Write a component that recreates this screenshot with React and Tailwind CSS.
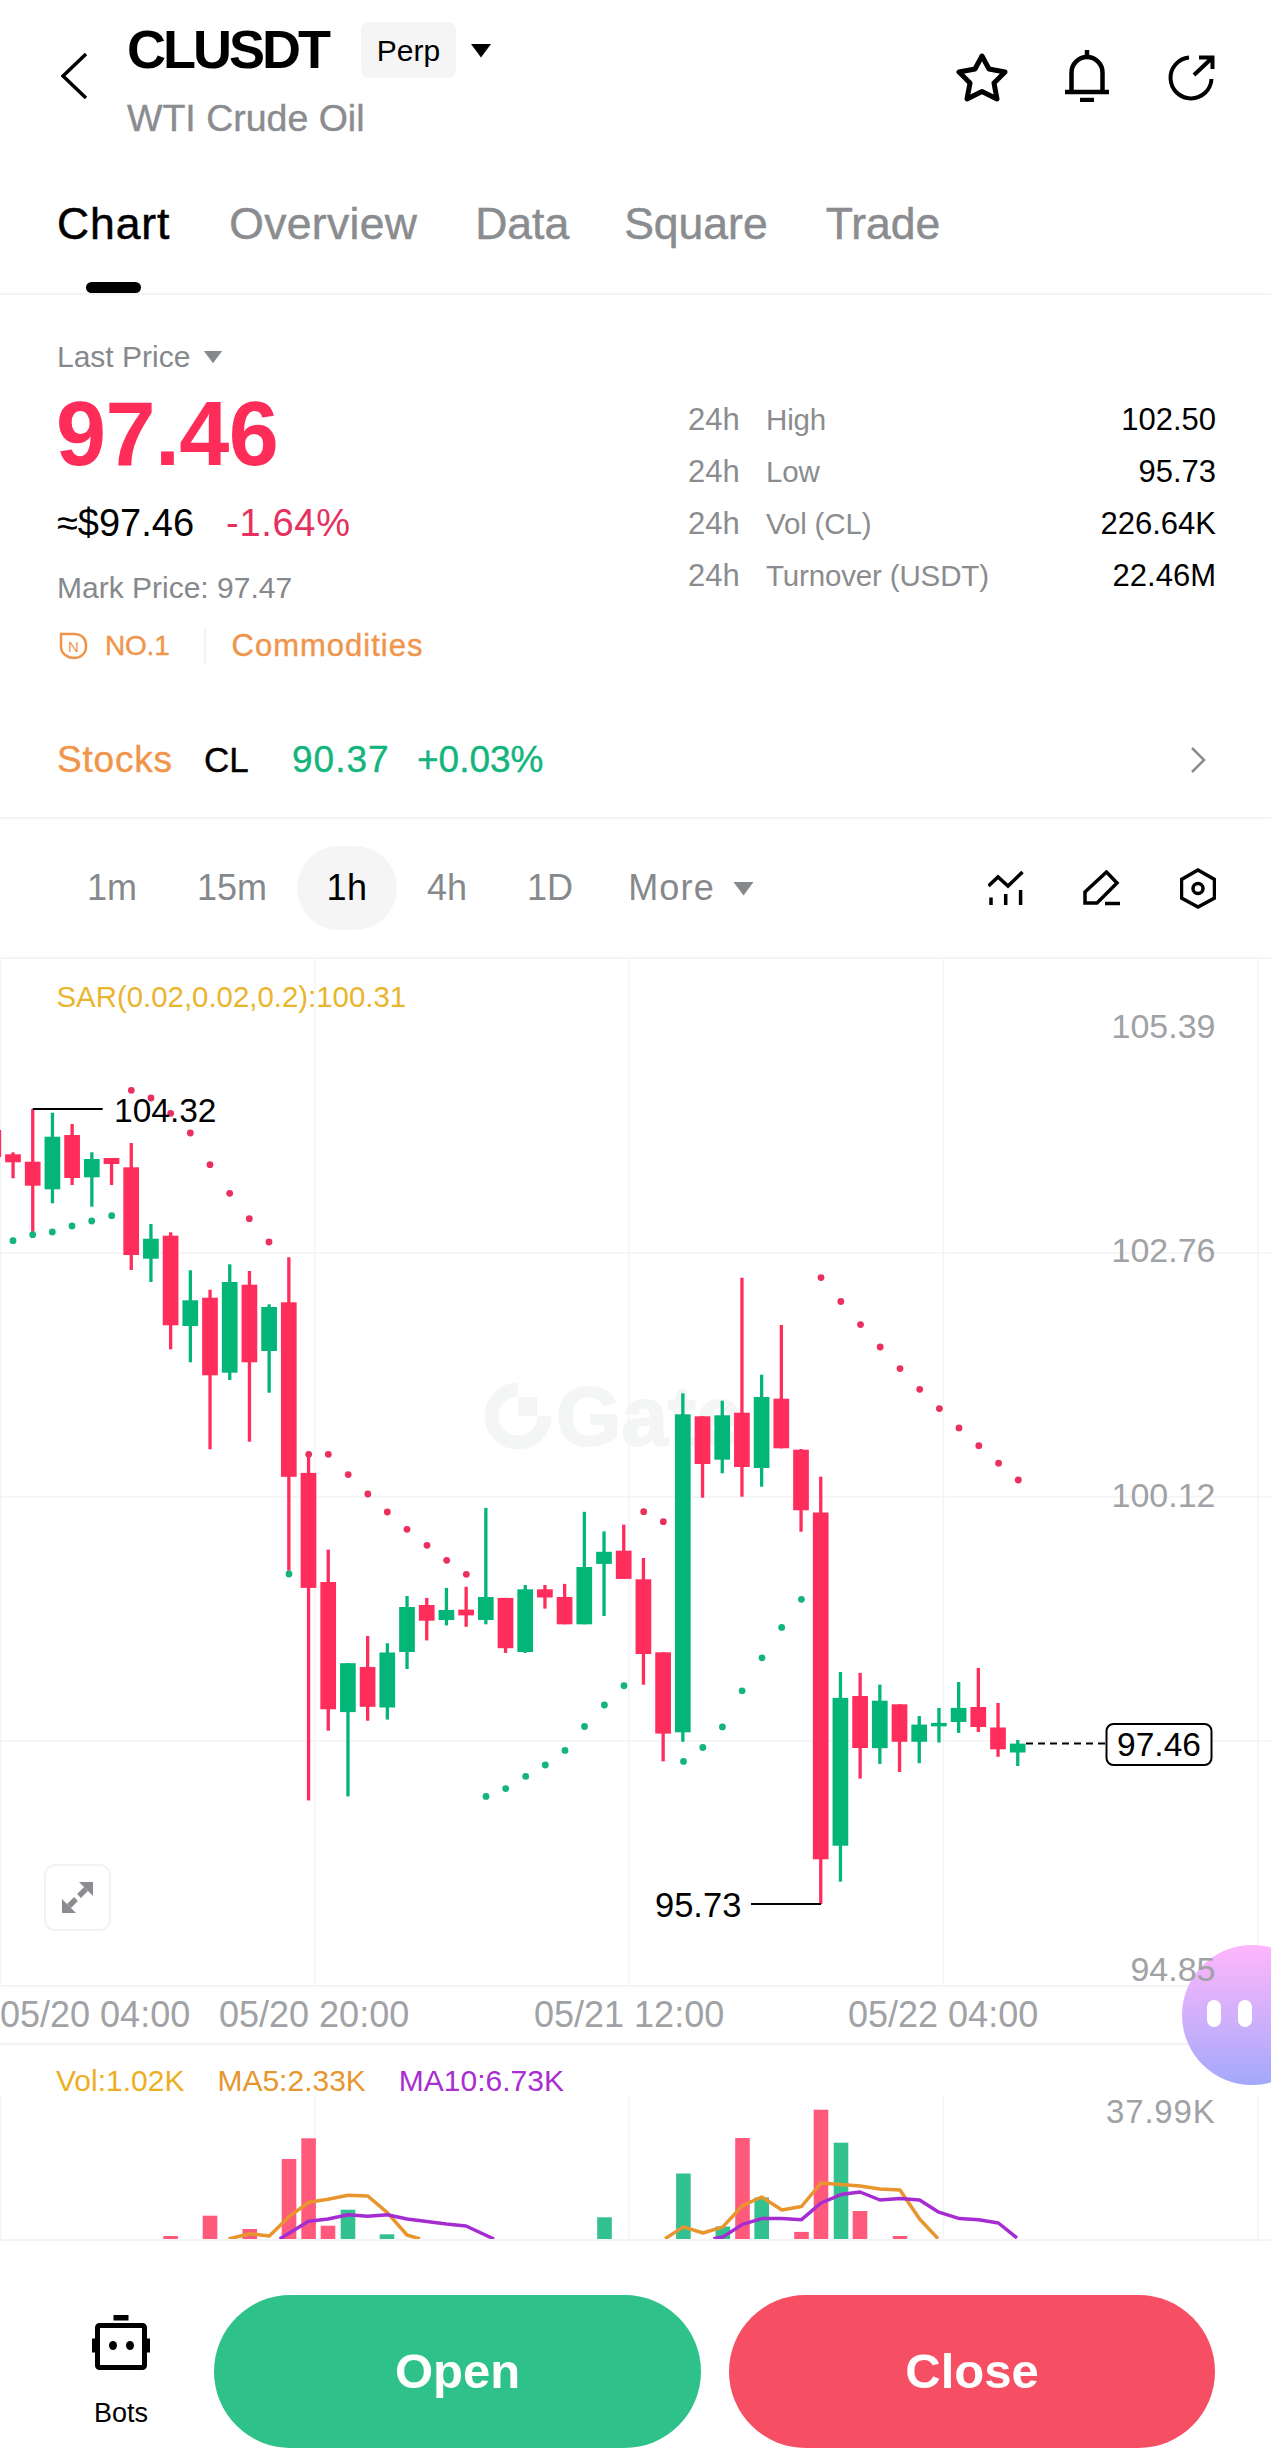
import React from "react";

// index of each candle: x = 13 + 19.7 * i
// [wick top, body top, body bottom, wick bottom, color]
const candles = [
  [1130, 1130, 1157, 1157, "r"],
  [1152.3, 1154.3, 1162.3, 1178.3, "r"],
  [1109, 1161.7, 1185.7, 1231.7, "r"],
  [1112.7, 1136.7, 1189.3, 1203.3, "g"],
  [1124, 1135, 1178, 1185, "r"],
  [1152.3, 1159, 1177.3, 1206.7, "g"],
  [1158, 1158, 1164, 1185, "r"],
  [1143, 1167.3, 1255, 1270, "r"],
  [1224, 1238.7, 1258.7, 1282, "g"],
  [1232.3, 1235.7, 1325.3, 1349.3, "r"],
  [1270.3, 1300.3, 1326, 1362.3, "g"],
  [1289.7, 1297.7, 1375.3, 1449.3, "r"],
  [1264.3, 1282, 1372.7, 1380, "g"],
  [1271, 1284.7, 1362.3, 1441.7, "r"],
  [1304.3, 1307, 1351, 1392.7, "g"],
  [1257.3, 1302.3, 1476.8, 1570.7, "r"],
  [1455, 1472.9, 1587.9, 1800.4, "r"],
  [1549.6, 1582, 1709.3, 1730.7, "r"],
  [1663.2, 1663.2, 1712.1, 1796.4, "g"],
  [1636, 1667, 1706.8, 1720.7, "r"],
  [1643.2, 1652.5, 1707.5, 1719.6, "g"],
  [1596, 1607, 1652, 1669, "g"],
  [1597.9, 1605, 1620.7, 1640.4, "r"],
  [1587.9, 1610, 1620, 1625.4, "g"],
  [1586.8, 1609.6, 1615.4, 1626.8, "r"],
  [1507.9, 1597, 1620, 1624.3, "g"],
  [1597.9, 1597.9, 1648.2, 1652.9, "r"],
  [1585, 1589.3, 1652, 1652.9, "g"],
  [1585, 1589.3, 1597.5, 1608.6, "r"],
  [1583.9, 1597, 1624.3, 1624.3, "r"],
  [1511.8, 1567, 1624.3, 1624.3, "g"],
  [1531.4, 1551.8, 1563.9, 1616, "g"],
  [1524.6, 1550.7, 1578.9, 1578.9, "r"],
  [1558, 1579.3, 1654, 1684.7, "r"],
  [1652.3, 1652.3, 1733.6, 1761.4, "r"],
  [1393.3, 1414.3, 1732.3, 1741.8, "g"],
  [1416.3, 1416.3, 1464, 1497.7, "r"],
  [1400.7, 1415.3, 1459.7, 1473.3, "g"],
  [1277.7, 1412.7, 1467, 1496.7, "r"],
  [1374.7, 1397, 1468, 1486.7, "g"],
  [1325, 1398.7, 1448.3, 1448.3, "r"],
  [1449, 1449.7, 1510.3, 1531.7, "r"],
  [1476.7, 1512.5, 1859.3, 1904, "r"],
  [1672, 1697.9, 1845.7, 1881.7, "g"],
  [1672.9, 1696, 1748, 1778.6, "r"],
  [1684.6, 1700.7, 1748.2, 1763.9, "g"],
  [1704.3, 1704.3, 1741.8, 1772, "r"],
  [1716, 1724.6, 1741.8, 1763.2, "g"],
  [1707.9, 1722.9, 1726.4, 1742.5, "g"],
  [1682, 1707.9, 1722, 1732.9, "g"],
  [1667.9, 1707, 1727, 1732, "r"],
  [1703, 1727.5, 1749.3, 1756.8, "r"],
  [1740, 1743.6, 1752.5, 1766, "g"],
];

const redDots = [
  [131.3, 1090.3], [151, 1098], [170.7, 1113.3], [190.3, 1133], [210, 1164.7], [229.7, 1193.3],
  [249.3, 1218.7], [269, 1242], [308.7, 1454.3], [328.3, 1454.3], [348.2, 1474.6], [367.8, 1494],
  [387.3, 1512], [407, 1529.3], [427, 1545.3], [446.7, 1560.3], [466.3, 1574.3], [643.7, 1511.7],
  [663.3, 1521.7], [821, 1277.6], [840.8, 1301.5], [860.5, 1324.6], [880.2, 1347], [900, 1368.6],
  [919.7, 1389.3], [939.4, 1408.6], [959, 1427.9], [978.8, 1445.7], [998.6, 1463.2], [1018.3, 1480],
];

const greenDots = [
  [13, 1240.7], [32.7, 1234.7], [52.3, 1232], [72, 1226], [91.7, 1221], [111.7, 1215.7], [289, 1574],
  [486, 1796.4], [505.7, 1788.6], [525.7, 1776.4], [545.3, 1765], [565, 1750.4], [584.5, 1726.5],
  [604.4, 1705], [624, 1685.7], [683.5, 1761.4], [702.8, 1747.5], [722.4, 1726.9], [742.1, 1690.8],
  [762, 1657.8], [781.7, 1627.4], [801.4, 1599.3],
];

const volBars = [
  [170.6, 2236, "r"], [210, 2215.7, "r"], [249.8, 2229, "r"], [289, 2159, "r"], [308.6, 2138.3, "r"],
  [328, 2225.7, "r"], [348, 2209.7, "g"], [387, 2234.3, "g"], [604.5, 2217.3, "g"], [683.4, 2173.5, "g"],
  [722.8, 2226.5, "g"], [742.5, 2138, "r"], [761.7, 2197.5, "g"], [801.5, 2231.9, "r"], [821, 2109.7, "r"],
  [841, 2142.7, "g"], [860, 2211, "r"], [900, 2236, "r"],
];

const ma5a = "228.6,2239 249.8,2233.7 269.4,2236 289,2216.7 308.6,2202.3 328,2199.3 348,2195.3 367.8,2196 387.3,2212.7 407,2235 420,2239";
const ma5b = "665,2238.7 683.4,2226.9 703,2233 722.8,2226.9 742.5,2205.7 761.7,2197 781.9,2210 801.5,2206.5 821,2183 841,2184.6 860,2186 880,2188.9 900,2190 919.6,2219 938,2238.7";
const ma10a = "279.6,2239 289,2233.3 308.6,2221.3 328,2219 348,2214.7 367.8,2216.3 387.3,2214.7 407,2219 446.5,2224 466,2226 494,2239";
const ma10b = "713.4,2238.7 722.8,2237 742.5,2224.4 761.7,2218.6 781.9,2218.6 801.5,2219.7 821,2203 841,2194.6 860,2192 880,2200 900,2198.6 919.6,2200 938,2211.8 959.4,2218.6 978.7,2219.7 998.4,2223 1017,2238";

const gridX = [0.5, 314.7, 628.7, 943.4, 1257.7];

const stats = [
  ["High", "102.50"],
  ["Low", "95.73"],
  ["Vol (CL)", "226.64K"],
  ["Turnover (USDT)", "22.46M"],
];

function Triangle({ className }) {
  return (
    <svg viewBox="0 0 22 15" className={className}>
      <path d="M1 1h20L11 14.500z" fill="currentColor" />
    </svg>
  );
}

function Candles() {
  return candles.map((c, n) => {
    const x = 13 + 19.7 * (n - 1);
    const fill = c[4] === "r" ? "#ff2d5b" : "#04b578";
    return (
      <g key={n} fill={fill}>
        <rect x={x - 1.6} y={c[0]} width="3.3" height={c[3] - c[0]} />
        <rect x={x - 7.85} y={c[1]} width="15.7" height={c[2] - c[1]} />
      </g>
    );
  });
}

function PriceChart() {
  return (
    <div className="relative h-[1026px]">
      <svg viewBox="0 959 1271 1026" className="block w-[1271px] h-[1026px]">
        {gridX.map((x) => (
          <line key={x} x1={x} x2={x} y1="959" y2={x > 1200 ? 1945 : 1985} stroke="#f3f3f3" strokeWidth="1.5" />
        ))}
        {[1253, 1497, 1741].map((y) => (
          <line key={y} x1="0" x2="1271" y1={y} y2={y} stroke="#f3f3f3" strokeWidth="1.5" />
        ))}

        {/* watermark */}
        <path d="M518 1389.500A26.500 26.500 0 1 0 544.500 1416" fill="none" stroke="#f4f5f5" strokeWidth="14" />
        <rect x="518" y="1397" width="19" height="19" fill="#f4f5f5" />
        <text x="556" y="1445" fontSize="84" fontWeight="700" fill="#f4f5f5" stroke="#f4f5f5" strokeWidth="2">Gate</text>

        <text x="56.500" y="1006.500" fontSize="29.400" fill="#eab52e">SAR(0.02,0.02,0.2):100.31</text>
        <g fontSize="34" fill="#a0a2a5" textAnchor="end">
          <text x="1215.500" y="1038">105.39</text>
          <text x="1215.500" y="1262">102.76</text>
          <text x="1215.500" y="1507">100.12</text>
          <text x="1215.500" y="1980.500">94.85</text>
        </g>

        <Candles />
        {redDots.map(([x, y]) => <circle key={x} cx={x} cy={y} r="3.400" fill="#e9305f" />)}
        {greenDots.map(([x, y]) => <circle key={x} cx={x} cy={y} r="3.400" fill="#13b57d" />)}

        {/* high / low markers */}
        <line x1="32.700" x2="102.700" y1="1109" y2="1109" stroke="#000" strokeWidth="2" />
        <text x="114" y="1121.500" fontSize="33.500" fill="#000">104.32</text>
        <line x1="751" x2="821" y1="1904" y2="1904" stroke="#000" strokeWidth="2" />
        <text x="655" y="1916.500" fontSize="34.500" fill="#000">95.73</text>

        {/* last price */}
        <line x1="1026" x2="1105" y1="1743.600" y2="1743.600" stroke="#000" strokeWidth="2" strokeDasharray="7 5" />
        <rect x="1106.500" y="1724" width="105" height="41" rx="7" fill="#fff" stroke="#000" strokeWidth="2" />
        <text x="1159" y="1756" fontSize="33.500" fill="#000" textAnchor="middle">97.46</text>
      </svg>

      <button className="absolute left-[44px] top-[905px] flex items-center justify-center w-[67px] h-[67px] bg-white border-2 border-[#f3f3f3] rounded-[11px]">
        <svg viewBox="0 0 31 31" className="w-[31px] h-[31px]" fill="#8a8c8f">
          <path d="M17 0h14v14z" />
          <path d="M0 31V17l14 14z" />
          <path d="M24 7l-7 7M7 24l7-7" stroke="#8a8c8f" strokeWidth="5.500" />
        </svg>
      </button>
    </div>
  );
}

function VolumeChart() {
  return (
    <svg viewBox="0 2096 1271 143" className="block w-[1271px] h-[143px]">
      {gridX.map((x) => (
        <line key={x} x1={x} x2={x} y1="2096" y2="2239" stroke="#f3f3f3" strokeWidth="1.5" />
      ))}
      {volBars.map(([x, y, c]) => (
        <rect key={x} x={x - 7.3} y={y} width="14.6" height={2239 - y} fill={c === "r" ? "#ff5a7b" : "#33c190"} />
      ))}
      <g fill="none" strokeWidth="3.5" strokeLinejoin="round">
        <polyline points={ma5a} stroke="#e8952e" />
        <polyline points={ma5b} stroke="#e8952e" />
        <polyline points={ma10a} stroke="#a52cd0" />
        <polyline points={ma10b} stroke="#a52cd0" />
      </g>
      <text x="1215.500" y="2123" fontSize="33" letterSpacing="0.8" fill="#a0a2a5" textAnchor="end">37.99K</text>
    </svg>
  );
}

export default function App() {
  return (
    <div className="relative w-[1271px] h-[2462px] overflow-hidden bg-white text-black font-['Liberation_Sans',Arial,sans-serif]">
      {/* floating assistant, the chart labels run over it */}
      <div className="absolute left-[1182px] top-[1945px] flex items-center gap-[17px] pl-[25px] w-[140px] h-[140px] rounded-full bg-linear-to-b from-[#ffb6fb] to-[#a3a8fb]">
        <span className="w-[14px] h-[27px] -mt-[4px] rounded-full bg-white"></span>
        <span className="w-[14px] h-[27px] -mt-[4px] rounded-full bg-white"></span>
      </div>

      {/* header */}
      <header className="flex items-start h-[198px] pl-[61px] pr-[56px] pt-[22px]">
        <svg viewBox="0 0 26 46" className="w-[26px] h-[46px] mt-[31px]" fill="none" stroke="#000" strokeWidth="3.5">
          <path d="M25 1L2 23l23 22" />
        </svg>
        <div className="ml-[40px]">
          <div className="flex items-center h-[56px]">
            <span className="text-[54px] leading-[56px] font-bold tracking-[-3px] -mt-[3px]">CLUSDT</span>
            <span className="flex items-center justify-center ml-[33px] w-[95px] h-[56px] rounded-[8px] bg-[#f5f5f5] text-[30px]">Perp</span>
            <Triangle className="w-[22px] h-[15px] ml-[14px] text-black" />
          </div>
          <div className="mt-[19px] text-[37.500px] leading-[42px] text-[#8a8c8f] [-webkit-text-stroke:0.4px]">WTI Crude Oil</div>
        </div>
        <div className="flex items-start ml-auto">
          <svg viewBox="0 0 52 50" className="w-[52px] h-[50px] mt-[30px]" fill="none" stroke="#000" strokeWidth="5" strokeLinejoin="round">
            <path d="M26 4l7 13 16 3-11 11 3 16-15-7.500L11 47l3-16L3 20l16-3z" />
          </svg>
          <svg viewBox="0 0 44 52" className="w-[44px] h-[52px] ml-[57px] mt-[28px]" fill="none" stroke="#000" strokeWidth="4.500">
            <path d="M22 0v6M6.500 41V22.500a15.500 15.500 0 0 1 31 0V41M0 42h44" />
            <path d="M15 50h14" strokeWidth="4.500" />
          </svg>
          <svg viewBox="0 0 47 46" className="w-[47px] h-[46px] ml-[59px] mt-[33px]" fill="none" stroke="#000" strokeWidth="4">
            <path d="M21 2.500A20.500 20.500 0 1 0 43.500 24" />
            <path d="M26 20L44 3M31 2.500h13.500V14" />
          </svg>
        </div>
      </header>

      {/* tabs */}
      <nav className="flex items-start h-[97px] pt-[1px] pl-[57px] gap-[59px] border-b-2 border-[#f4f4f4] text-[44.500px] leading-[50px] text-[#8a8c8f] [-webkit-text-stroke:0.5px]">
        <div className="flex flex-col items-center text-black">
          <span className="tracking-[0.900px]">Chart</span>
          <span className="w-[55px] h-[11px] mt-[33px] rounded-full bg-black"></span>
        </div>
        <span className="tracking-[0.300px]">Overview</span>
        <span className="-ml-[1px]">Data</span>
        <span className="-ml-[4px]">Square</span>
        <span className="-ml-[1px]">Trade</span>
      </nav>

      {/* price + 24h stats */}
      <section className="flex pl-[57px] pr-[55px] h-[443px]">
        <div className="flex-1 pt-[45px]">
          <div className="flex items-center text-[30px] leading-[34px] text-[#86898c]">
            Last Price
            <Triangle className="w-[20px] h-[14px] ml-[13px]" />
          </div>
          <div className="-ml-[1px] mt-[15px] text-[90px] leading-[90px] font-bold tracking-[-0.600px] text-[#fe2c59]">97.46</div>
          <div className="flex mt-[22px] text-[38px] leading-[44px]">
            <span>≈$97.46</span>
            <span className="ml-[32px] tracking-[0.700px] text-[#e6305e]">-1.64%</span>
          </div>
          <div className="mt-[26px] text-[30px] leading-[34px] text-[#86898c]">Mark Price: 97.47</div>
          <div className="flex items-center h-[36px] mt-[23px] text-[#f0954b]">
            <svg viewBox="0 0 29 28" className="w-[29px] h-[28px] ml-[2px]" fill="none" stroke="currentColor" strokeWidth="2.500">
              <path d="M2 2h13c8 0 12 5 12 11v2c0 7-6 11-12 11-7 0-13-5-13-11z" />
              <text x="14.500" y="20" fontSize="15" fill="currentColor" stroke="none" textAnchor="middle">N</text>
            </svg>
            <span className="ml-[17px] text-[28px] tracking-[-0.200px] [-webkit-text-stroke:0.4px]">NO.1</span>
            <span className="w-[2px] h-[36px] ml-[34px] bg-[#f4f4f4]"></span>
            <span className="ml-[26px] text-[31px] tracking-[1px] [-webkit-text-stroke:0.4px]">Commodities</span>
          </div>
        </div>
        <div className="w-[528px] pt-[99px]">
          {stats.map(([label, value]) => (
            <div key={label} className="flex h-[52px] items-center text-[#8a8c8f] text-[31px]">
              <span className="w-[78px]">24h</span>
              <span className="text-[29.500px] tracking-[-0.150px]">{label}</span>
              <span className="ml-auto text-black">{value}</span>
            </div>
          ))}
        </div>
      </section>

      {/* underlying stock */}
      <div className="flex items-start h-[81px] pt-[1px] pl-[57px] pr-[65px] text-[37px] leading-[42px] border-b-2 border-[#f4f4f4] [-webkit-text-stroke:0.4px]">
        <span className="tracking-[0.8px] text-[#f0954b] w-[147px]">Stocks</span>
        <span className="w-[88px] text-[35px]">CL</span>
        <span className="w-[125px] tracking-[1px] text-[#13b57d]">90.37</span>
        <span className="text-[#13b57d]">+0.03%</span>
        <svg viewBox="0 0 15 26" className="w-[15px] h-[26px] ml-auto mt-[8px]" fill="none" stroke="#8a8c8f" strokeWidth="2.500">
          <path d="M1 1l12 12L1 25" />
        </svg>
      </div>

      {/* timeframes */}
      <div className="flex items-center h-[140px] pl-[57px] pr-[55px] border-b-2 border-[#f4f4f4] text-[36px] text-[#86898c]">
        <span className="px-[30px]">1m</span>
        <span className="px-[30px]">15m</span>
        <span className="flex items-center justify-center w-[100px] h-[84px] rounded-full bg-[#f5f5f5] text-black tracking-[0.5px]">1h</span>
        <span className="px-[30px]">4h</span>
        <span className="px-[30px]">1D</span>
        <span className="pl-[25px] tracking-[1.200px]">More</span>
        <Triangle className="w-[23px] h-[15px] ml-[17px]" />
        <div className="flex items-center ml-auto">
          <svg viewBox="0 0 36 35" className="w-[36px] h-[35px]" fill="none" stroke="#000" strokeWidth="3.500">
            <path d="M.500 15L10 6l10 9L34.500 1M3 26.500V34M17.700 23V34M32.600 19V34" />
          </svg>
          <svg viewBox="0 0 38 36" className="w-[38px] h-[36px] ml-[59px]" fill="none" stroke="#000" strokeWidth="3.500">
            <path d="M2 33V22L23.500 2 34 13 14 33zM22 33.500h15" />
          </svg>
          <svg viewBox="0 0 36 41" className="w-[36px] h-[41px] ml-[59px]" fill="none" stroke="#000" strokeWidth="3.500">
            <path d="M18 2l16.500 9.500V30L18 39 1.500 30V11.500z" />
            <circle cx="18" cy="20.500" r="5" />
          </svg>
        </div>
      </div>

      <PriceChart />

      {/* time axis */}
      <div className="flex items-center h-[60px] border-y-2 border-[#f4f4f4] text-[36px] text-[#a0a2a5] text-center whitespace-nowrap">
        <span className="w-[190px]">05/20 04:00</span>
        <span className="w-[190px] ml-[29px]">05/20 20:00</span>
        <span className="w-[190px] ml-[125px]">05/21 12:00</span>
        <span className="w-[190px] ml-[124px]">05/22 04:00</span>
      </div>

      {/* volume */}
      <div className="flex gap-[33px] pl-[56px] pt-[21px] text-[30px] leading-[30px]">
        <span className="text-[#edaf22]">Vol:1.02K</span>
        <span className="text-[#e8962e]">MA5:2.33K</span>
        <span className="text-[#a82ed2]">MA10:6.73K</span>
      </div>
      <VolumeChart />

      {/* bottom bar */}
      <footer className="flex items-start pl-[92px] pt-[54px] border-t-2 border-[#f4f4f4]">
        <div className="flex flex-col items-center w-[58px] mt-[20px]">
          <svg viewBox="0 0 58 55" className="w-[58px] h-[55px]">
            <rect x="21.500" y="0" width="15" height="5.500" fill="#000" />
            <rect x="5.500" y="10.500" width="47" height="42" rx="2" fill="none" stroke="#000" strokeWidth="5" />
            <rect x="0" y="23.500" width="4" height="14" fill="#000" />
            <rect x="54" y="23.500" width="4" height="14" fill="#000" />
            <ellipse cx="21" cy="30.500" rx="4" ry="4.500" fill="#000" />
            <ellipse cx="38" cy="30.500" rx="4" ry="4.500" fill="#000" />
          </svg>
          <span className="mt-[28px] text-[27px] leading-[30px] whitespace-nowrap">Bots</span>
        </div>
        <button className="ml-[64px] w-[487px] h-[153px] rounded-full bg-[#2ec28a] text-white text-[49px] font-bold">Open</button>
        <button className="ml-[28px] w-[486px] h-[153px] rounded-full bg-[#f64f63] text-white text-[49px] font-bold">Close</button>
      </footer>
    </div>
  );
}
